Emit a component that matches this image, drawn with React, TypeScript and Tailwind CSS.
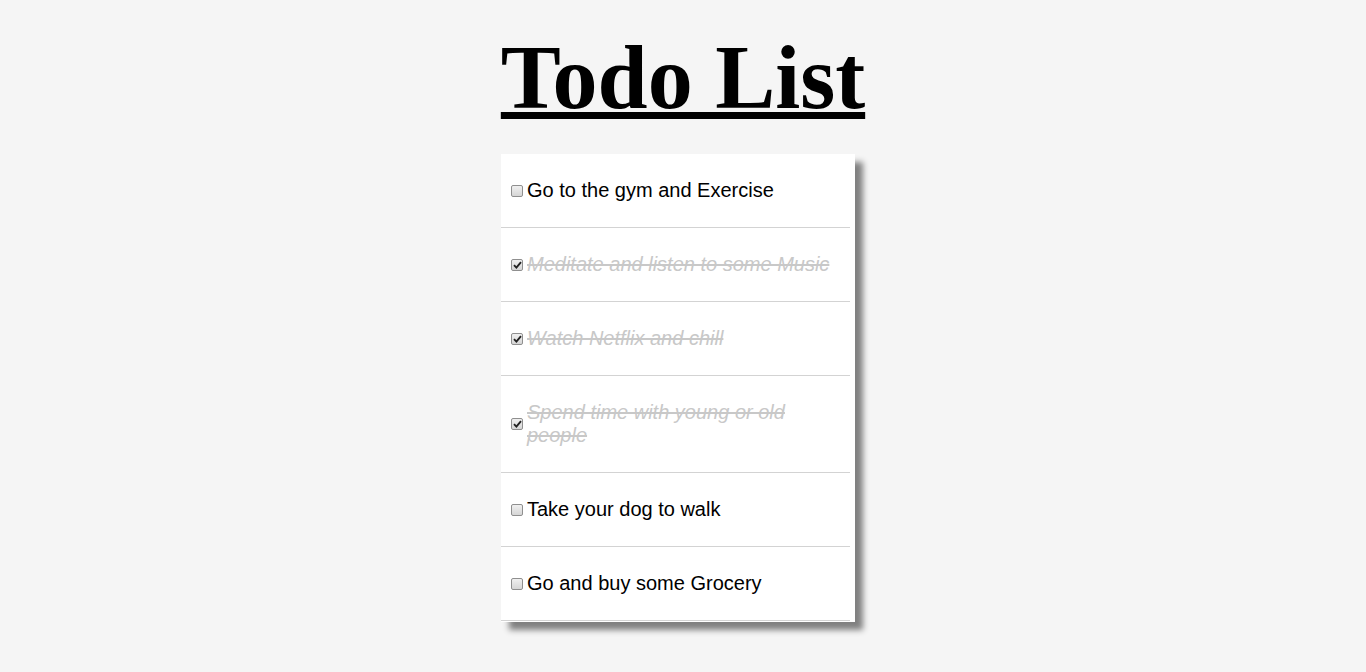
import { useState } from 'react';

const initialTodos = [
  { id: 1, text: 'Go to the gym and Exercise', completed: false },
  { id: 2, text: 'Meditate and listen to some Music', completed: true },
  { id: 3, text: 'Watch Netflix and chill', completed: true },
  { id: 4, text: 'Spend time with young or old people', completed: true },
  { id: 5, text: 'Take your dog to walk', completed: false },
  { id: 6, text: 'Go and buy some Grocery', completed: false },
];

function Check({ checked }: { checked: boolean }) {
  return (
    <span className="ml-[10px] mr-[4px] flex h-[12px] w-[12px] shrink-0 items-center justify-center rounded-[2px] border border-[#8f8f8f] bg-gradient-to-b from-[#f0f0f0] to-[#d6d6d6]">
      {checked && (
        <svg width="9" height="8" viewBox="0 0 9 8">
          <path d="M1 4.2 L3.4 6.6 L8 1.2" fill="none" stroke="#222" strokeWidth="1.9" />
        </svg>
      )}
    </span>
  );
}

export default function App() {
  const [todos, setTodos] = useState(initialTodos);

  const toggle = (id: number) =>
    setTodos(todos.map((t) => (t.id === id ? { ...t, completed: !t.completed } : t)));

  return (
    <div className="min-h-[672px] bg-[#f5f5f5] pt-[28px]">
      <h1 className="text-center font-['Liberation_Serif',serif] text-[90px] font-bold leading-[100px] text-black underline decoration-[7px] underline-offset-[4px]">
        Todo List
      </h1>
      <div className="mx-auto mt-[26px] w-[364px]">
        <div className="w-[354px] bg-white pb-[1px] shadow-[8px_8px_6px_#808080]">
          {todos.map((todo) => (
            <div
              key={todo.id}
              onClick={() => toggle(todo.id)}
              className="mr-[5px] flex cursor-pointer items-center border-b border-[#d3d3d3] py-[25px] font-['Liberation_Sans',Arial,sans-serif] text-[20px] leading-[23px]"
            >
              <Check checked={todo.completed} />
              <span
                className={
                  todo.completed
                    ? 'max-w-[312px] italic text-[#c8c8c8] line-through'
                    : 'max-w-[312px] text-black'
                }
              >
                {todo.text}
              </span>
            </div>
          ))}
        </div>
      </div>
    </div>
  );
}
